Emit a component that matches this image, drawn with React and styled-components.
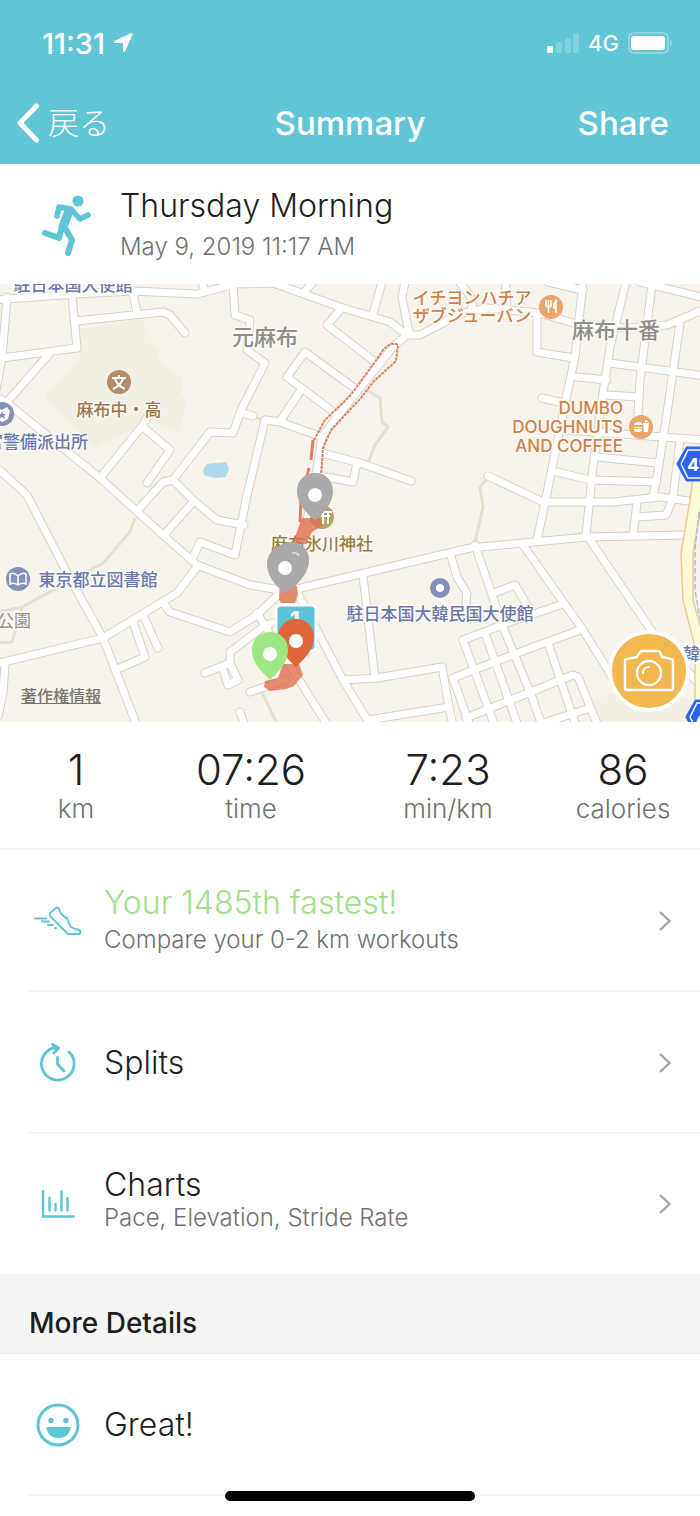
import styled, { createGlobalStyle } from 'styled-components';

const roads = [
  'M-5 300L20 298L75 294L133 291L197 294L235 284L273 283L340 307L390 322L407 335',
  'M407 335L420 335L460 314L487 308L540 313L573 323L603 326L627 328L667 325L705 309',
  'M7 297L2 358L-4 390',
  'M72 296L77 348L2 358',
  'M76 321L163 312L170 315L185 333',
  'M133 292L137 313',
  'M50 353L7 402',
  'M-5 396L7 403L100 478L163 535L197 565L250 585L280 590L297 589L470 548L523 543L587 537L685 535',
  'M-5 466L27 495L67 573L103 638L137 726',
  'M100 478L143 425L148 416',
  'M143 427L170 450L147 483',
  'M137 511L163 482L173 480L210 432L233 433L242 408L265 363L247 350L250 320L235 315L233 284',
  'M242 413L253 416',
  'M173 480L193 500L217 520L244 525',
  'M193 502L164 535',
  'M246 500L235 555L200 542L192 560',
  'M265 420L246 500',
  'M265 420L280 422L322 437',
  'M281 420L301 390',
  'M335 413L287 377L305 352L357 390',
  'M375 362L327 325L341 309',
  'M407 335L393 347L340 413L322 437L315 480L307 520',
  'M322 453L360 463L411 481',
  'M357 463L353 482L327 477',
  'M373 314L382 282',
  'M409 333L402 297L405 282',
  'M306 290L315 280',
  'M202 282L205 292',
  'M583 282L575 357L563 413L545 503L537 540',
  'M626 282L610 347L603 393L593 467L586 535',
  'M652 284L640 380L638 415',
  'M680 323L667 413L657 477L653 497',
  'M537 315L537 352L573 358',
  'M610 363L705 376',
  'M577 377L607 380',
  'M607 395L638 397',
  'M542 398L563 403',
  'M567 430L705 440',
  'M597 457L657 463',
  'M557 472L590 480L657 482',
  'M488 476L543 502L613 502L660 497L695 502',
  'M680 440L673 498',
  'M640 282L705 298',
  'M458 280L473 300L471 312',
  'M505 280L507 308',
  'M548 282L583 290',
  'M637 503L633 535',
  'M637 517L666 515L671 503',
  'M475 545L503 627L532 697L542 726',
  'M523 545L583 630L614 680',
  'M590 540L653 633L700 685',
  'M497 592L515 585L528 607',
  'M560 605L510 622L463 640L495 726',
  'M580 630L520 652L453 678L470 726',
  'M485 633L518 726',
  'M548 643L576 726',
  'M466 718L573 675L578 677L598 726',
  'M540 724L590 708',
  'M450 553L457 577L467 593L465 610',
  'M363 576L375 678',
  'M297 592L343 680L371 726',
  'M343 680L377 678L442 667L449 707L453 726',
  'M368 720L449 707',
  'M257 613L328 726',
  'M280 593L257 615L230 632L170 612L163 603',
  'M272 623L263 627L230 652L230 663L205 673',
  'M222 667L228 685L238 680L230 663',
  'M250 692L285 680',
  'M240 712L245 726',
  'M197 567L177 593L103 638L-5 664',
  'M133 622L145 657L115 670',
  'M144 617L158 648',
  'M5 664L3 693L-2 716',
];

const footpaths = [
  'M367 390L380 398L382 422L388 427L375 445L368 463',
  'M488 477L480 487L483 507L475 542',
  'M135 518L130 532L103 563L22 607L-2 612',
  'M22 608L12 642L-2 643',
  'M262 692L277 724',
  'M253 417L266 420',
];

const stats = [
  { value: '1', unit: 'km' },
  { value: '07:26', unit: 'time' },
  { value: '7:23', unit: 'min/km' },
  { value: '86', unit: 'calories' },
];

const MapPin = ({ x, y, color }) => (
  <g transform={`translate(${x} ${y})`}>
    <path
      d="M0 26C-3 22-18 12-18-4C-18-15-10-22 0-22C10-22 18-15 18-4C18 12 3 22 0 26Z"
      fill={color}
    />
    <circle r="7" fill="#fff" />
  </g>
);

const RouteShield = ({ x, y }) => (
  <g transform={`translate(${x} ${y})`}>
    <path d="M0 16L9 0H36V32H9Z" fill="#2c64ee" stroke="#2c64ee" strokeWidth="3" strokeLinejoin="round" />
    <path d="M3 16L10 2H36M3 16L10 30H36" fill="none" stroke="#fff" strokeWidth="1.6" />
    <ShieldNumber x="9" y="23">41</ShieldNumber>
  </g>
);

const WorkoutMap = () => (
  <MapDrawing viewBox="0 284 700 438" preserveAspectRatio="xMidYMid slice" role="img" aria-label="Workout route">
    <rect y="284" width="700" height="438" fill="#f8f4ec" />
    <path
      d="M79 329L142 319L150 338L160 350L157 361L182 378L181 396L187 398L179 433L150 420L96 448L84 438L45 397L80 360Z"
      fill="#f4efe4"
    />
    <path d="M585 705L620 690L695 700V722H595Z" fill="#f4efe4" />
    <path d="M203 470L207 464L226 462L229 469L226 477L214 478L204 475Z" fill="#afd8eb" />
    <g fill="none" stroke="#e4dfd3" strokeWidth="3">
      {footpaths.map((d) => (
        <path key={d} d={d} />
      ))}
    </g>
    <g fill="none" stroke="#d6d0c7" strokeWidth="9" strokeLinecap="round" strokeLinejoin="round">
      {roads.map((d) => (
        <path key={d} d={d} />
      ))}
    </g>
    <g fill="none" stroke="#fff" strokeWidth="7" strokeLinecap="round" strokeLinejoin="round">
      {roads.map((d) => (
        <path key={d} d={d} />
      ))}
    </g>
    <path
      d="M693 478L690 500L681 553L683 600L695 647V724H704V640L693 600V553L702 500V478Z"
      fill="#fbfad9"
      stroke="#ebc98c"
      strokeWidth="1.4"
    />
    <path d="M699 512L695 550L695 590L701 625" fill="none" stroke="#aab9da" strokeWidth="1.4" strokeDasharray="6 2" />

    <g fill="none" stroke="#df7f62" strokeWidth="2">
      <path d="M314 440L325 420L350 396L375 362L383 350Q392 341 398 345L396 361L374 381L360 399L331 430L323 448L321 478" strokeDasharray="3 1" />
      <path d="M313 440L311 460M309 468L307 476M301 500L300 522" strokeWidth="3" />
    </g>

    <g>
      <circle cx="322" cy="517" r="12" fill="#b8a06a" />
      <path d="M319 512H332M321 516H330M323 512V524M328 512V524" stroke="#fff" strokeWidth="2" />
      <PlaceName x="322" y="550" $color="#98803f">麻布氷川神社</PlaceName>
    </g>
    <g fill="#de6d48" fillOpacity=".78">
      <path d="M302 518L311 518L321 519L322 526L312 532L306 544L293 543L300 523Z" />
      <path d="M280 583L297 586L298 595L295 603H281L279 599Z" />
      <path d="M283 664L299 664L303 675L294 686L286 689L270 691L264 687L265 681L278 678Z" />
    </g>

    <AreaName x="265" y="345">元麻布</AreaName>
    <AreaName x="616" y="338">麻布十番</AreaName>
    <PlaceName x="73" y="291" $color="#6878ae">駐日本国大使館</PlaceName>
    <PlaceName x="119" y="416" $color="#9d754d">麻布中・高</PlaceName>
    <PlaceName x="37" y="448" $color="#6878ae">宮警備派出所</PlaceName>
    <PlaceName x="98" y="586" $color="#6878ae">東京都立図書館</PlaceName>
    <PlaceName x="440" y="620" $color="#6878ae">駐日本国大韓民国大使館</PlaceName>
    <PlaceName x="700" y="660" $color="#6878ae">韓人</PlaceName>
    <ParkName x="14" y="627">公園</ParkName>
    <PlaceName x="472" y="304" $color="#cd8246">イチヨンハチア</PlaceName>
    <PlaceName x="472" y="322" $color="#cd8246">ザブジューバン</PlaceName>
    <PlaceName x="623" y="414" $color="#cd8246" $end>DUMBO</PlaceName>
    <PlaceName x="623" y="433" $color="#cd8246" $end>DOUGHNUTS</PlaceName>
    <PlaceName x="623" y="452" $color="#cd8246" $end>AND COFFEE</PlaceName>

    <circle cx="119" cy="382" r="12" fill="#b08e6b" />
    <path d="M112 378H126M119 375V378M123 379Q120 386 113 389M115 379Q118 386 125 389" fill="none" stroke="#fff" strokeWidth="2" />
    <circle cx="2" cy="414" r="12" fill="#8490ba" />
    <path d="M-3 408L2 410L7 407L10 411L8 419L2 422L-4 419Z" fill="#fff" />
    <path d="M2 411L3 414H6L4 416L5 419L2 417L-1 419L0 416L-2 414H1Z" fill="#8490ba" />
    <circle cx="18" cy="579" r="12" fill="#8490ba" />
    <path d="M18 576Q14 572 10 574V584Q14 582 18 585Q22 582 26 584V574Q22 572 18 576V585" fill="none" stroke="#fff" strokeWidth="1.5" />
    <circle cx="440" cy="588" r="10" fill="#8490ba" />
    <circle cx="440" cy="588" r="4" fill="#fff" />
    <circle cx="551" cy="307" r="12" fill="#e9a56c" />
    <path d="M546 300V305Q546 307 548.5 307Q551 307 551 305V300M548.5 300V313M556 313V301Q553 304 554 308H556" fill="none" stroke="#fff" strokeWidth="1.7" />
    <circle cx="641" cy="427" r="12" fill="#e9a56c" />
    <path d="M634 425Q634 422 638 422Q642 422 642 425ZM634 427H642V428H634ZM634 429H642Q642 432 640 432H636Q634 432 634 429ZM643 423H649L648 432H644ZM645 423V420L648 421V422H646V423Z" fill="#fff" />

    <RouteShield x={678} y={448} />
    <RouteShield x={687} y={701} />

    <MapPin x={315} y={495} color="#a9a9a9" />
    <MapPin x={291} y={564} color="#a9a9a9" />
    <MapPin x={285} y={568} color="#a9a9a9" />
    <path d="M292 553Q297 552 299 556" fill="none" stroke="#ddd" strokeWidth="1.5" />
    <rect x="276" y="605" width="40" height="46" rx="5" fill="#5dc3d6" stroke="#fff" strokeWidth="3" />
    <MarkerNumber x="295" y="629">1</MarkerNumber>
    <MapPin x={296} y={641} color="#df6638" />
    <MapPin x={270} y={654} color="#9fe784" />
  </MapDrawing>
);

const RunnerIcon = () => (
  <svg width="50" height="62" viewBox="42 194 50 62" fill="none" stroke="#5fc4d5" strokeWidth="6" strokeLinecap="round" strokeLinejoin="round">
    <circle cx="78" cy="201" r="5.6" fill="#5fc4d5" stroke="none" />
    <path d="M57 216L59 207L71 209L80 219L88 215" strokeWidth="5.6" />
    <path d="M69 211L63 227" strokeWidth="9" />
    <path d="M64 226L72 240L68 253M62 227L59 238L45 233" strokeWidth="6" />
  </svg>
);

const ShoeIcon = () => (
  <svg width="48" height="30" viewBox="32 905 48 30" fill="none" stroke="#5fc4d5" strokeWidth="2" strokeLinecap="round" strokeLinejoin="round">
    <path d="M48 912L54 907Q56 906 57 908Q59 915 65 917Q67 923 69 926Q72 928 77 929Q79 930 78 933H66L49 916Q47 914 48 912Z" />
    <path d="M33 917.5H44M40 920.5H47M46 924H51M53 927H54" />
  </svg>
);

const SplitsIcon = () => (
  <svg width="38" height="40" viewBox="38 1043 38 40" fill="none" stroke="#5fc4d5" strokeWidth="2.8" strokeLinecap="round" strokeLinejoin="round">
    <path d="M68 1052A16.3 16.3 0 1 1 56 1047.5M51.5 1044.5L57.5 1048L53 1053M56.5 1057.5V1064L63 1071" />
  </svg>
);

const ChartIcon = () => (
  <svg width="34" height="28" viewBox="41 1190 34 28" fill="none" stroke="#5fc4d5" strokeWidth="2.4" strokeLinecap="round" strokeLinejoin="round">
    <path d="M43 1191V1216.5H74M49.5 1198V1210.5M55.5 1204V1210.5M61.5 1191.5V1210.5M67.5 1198V1210.5" />
  </svg>
);

const SmileIcon = () => (
  <svg width="44" height="44" viewBox="0 0 44 44">
    <circle cx="22" cy="22" r="20" fill="none" stroke="#5fc4d5" strokeWidth="3" />
    <circle cx="15" cy="17.5" r="2.7" fill="#5fc4d5" />
    <circle cx="30" cy="17.5" r="2.7" fill="#5fc4d5" />
    <path d="M11 24H34Q35 24 34.5 26Q32 35 22.5 35Q13 35 10.5 26Q10 24 11 24Z" fill="#5fc4d5" />
  </svg>
);

const Chevron = () => (
  <svg width="14" height="22" viewBox="0 0 14 22" fill="none" stroke="#a6a6a6" strokeWidth="2.4">
    <path d="M2 2L11.5 11L2 20" />
  </svg>
);

const App = () => (
  <Page>
    <GlobalStyle />
    <Header>
      <StatusBar>
        <Clock>
          11:31
          <svg width="20" height="20" viewBox="0 0 20 20">
            <path d="M18 0Q20 0 19.5 2L12 18.5Q10.5 20 10 18V10H2Q0 9.5 1.5 8Z" fill="#fff" />
          </svg>
        </Clock>
        <Signal>
          <svg width="32" height="20" viewBox="0 0 32 20" fill="#fff">
            <rect y="13" width="6" height="7" rx="1.5" />
            <rect x="9" y="9" width="6" height="11" rx="1.5" opacity=".2" />
            <rect x="18" y="5" width="6" height="15" rx="1.5" opacity=".2" />
            <rect x="26" width="6" height="20" rx="1.5" opacity=".2" />
          </svg>
          4G
          <svg width="45" height="22" viewBox="0 0 45 22" fill="#fff">
            <rect x="1" y="1" width="39" height="20" rx="5" fill="none" stroke="#fff" strokeWidth="1.6" opacity=".4" />
            <rect x="3" y="4" width="34" height="14" rx="3" />
            <path d="M42 7.5Q45 11 42 14.5Z" opacity=".5" />
          </svg>
        </Signal>
      </StatusBar>
      <NavBar>
        <BackButton type="button">
          <svg width="24" height="40" viewBox="0 0 24 40" fill="none" stroke="#fff" strokeWidth="5" strokeLinecap="round" strokeLinejoin="round">
            <path d="M20.5 3L4 20L20.5 37" />
          </svg>
          <BackLabel>戻る</BackLabel>
        </BackButton>
        <NavTitle>Summary</NavTitle>
        <ShareButton type="button">Share</ShareButton>
      </NavBar>
    </Header>

    <Workout>
      <RunnerIcon />
      <div>
        <WorkoutName>Thursday Morning</WorkoutName>
        <WorkoutDate>May 9, 2019 11:17 AM</WorkoutDate>
      </div>
    </Workout>

    <MapArea>
      <WorkoutMap />
      <Copyright href="#copyright">著作権情報</Copyright>
      <CameraButton type="button" aria-label="Add photo">
        <svg width="52" height="44" viewBox="0 0 52 44" fill="none" stroke="#fff" strokeWidth="2.4" strokeLinejoin="round">
          <path d="M4 10Q2 10 2 12V39Q2 41 4 41H48Q50 41 50 39V12Q50 10 48 10L39 8L37 3Q36.5 2 35 2H19Q17.5 2 17 3L14 8Z" />
          <circle cx="26" cy="24" r="12" />
          <path d="M20 24Q20 18 26 18" strokeWidth="2" strokeLinecap="round" />
        </svg>
      </CameraButton>
    </MapArea>

    <Stats>
      {stats.map(({ value, unit }) => (
        <Stat key={unit}>
          <StatValue>{value}</StatValue>
          <StatUnit>{unit}</StatUnit>
        </Stat>
      ))}
    </Stats>

    <Row type="button">
      <IconBox><ShoeIcon /></IconBox>
      <RowText>
        <RowTitle $color="#9fe08a">Your 1485th fastest!</RowTitle>
        <RowDetail $roomy>Compare your 0-2 km workouts</RowDetail>
      </RowText>
      <Chevron />
    </Row>
    <Row type="button">
      <IconBox><SplitsIcon /></IconBox>
      <RowText>
        <RowTitle>Splits</RowTitle>
      </RowText>
      <Chevron />
    </Row>
    <Row type="button" $last>
      <IconBox><ChartIcon /></IconBox>
      <RowText>
        <RowTitle>Charts</RowTitle>
        <RowDetail>Pace, Elevation, Stride Rate</RowDetail>
      </RowText>
      <Chevron />
    </Row>

    <SectionTitle>More Details</SectionTitle>
    <Row as="div">
      <IconBox><SmileIcon /></IconBox>
      <RowText>
        <RowTitle>Great!</RowTitle>
      </RowText>
    </Row>
    <HomeIndicator />
  </Page>
);

export default App;

const GlobalStyle = createGlobalStyle`
  * {
    box-sizing: border-box;
  }
  body {
    margin: 0;
    background: #fff;
    color: #1f1f21;
    font-family: Inter, 'Noto Sans CJK JP', sans-serif;
  }
  button {
    border: none;
    padding: 0;
    background: none;
    color: inherit;
    font: inherit;
    cursor: pointer;
  }
  svg {
    display: block;
    flex-shrink: 0;
  }
`;

const Page = styled.main`
  width: 100%;
  min-height: 100vh;
  padding-bottom: 20px;
`;

const Header = styled.header`
  background: #62c5d5;
  color: #fff;
`;

const StatusBar = styled.div`
  display: flex;
  justify-content: space-between;
  align-items: center;
  height: 82px;
  padding: 4px 27px 0 42px;
`;

const Clock = styled.div`
  display: flex;
  align-items: center;
  gap: 8px;
  font-size: 29px;
  font-weight: 500;
`;

const Signal = styled.div`
  display: flex;
  align-items: center;
  gap: 9px;
  font-size: 22px;
  font-weight: 500;
`;

const NavBar = styled.nav`
  display: grid;
  grid-template-columns: 1fr auto 1fr;
  align-items: center;
  height: 82px;
  padding: 0 31px 0 16px;
`;

const BackButton = styled.button`
  display: flex;
  align-items: center;
  justify-self: start;
  gap: 8px;
  && {
    font-size: 31px;
    font-weight: 300;
  }
`;

const BackLabel = styled.span`
  padding-bottom: 6px;
`;

const NavTitle = styled.h1`
  margin: 0;
  padding-left: 15px;
  font-size: 33px;
  font-weight: 500;
`;

const ShareButton = styled.button`
  && {
    font-size: 33px;
    font-weight: 500;
  }
  justify-self: end;
`;

const Workout = styled.section`
  display: flex;
  align-items: center;
  gap: 28px;
  height: 120px;
  padding: 2px 42px 0;
`;

const WorkoutName = styled.h2`
  margin: 0;
  font-size: 32px;
  font-weight: 300;
  line-height: 44px;
`;

const WorkoutDate = styled.p`
  margin: 0;
  color: #717171;
  font-size: 24px;
  font-weight: 300;
  line-height: 38px;
`;

const MapArea = styled.section`
  position: relative;
  overflow: hidden;
`;

const MapDrawing = styled.svg`
  width: 100%;
  height: auto;
  font-family: Inter, 'Noto Sans CJK JP', sans-serif;
  text-anchor: middle;
`;

const PlaceName = styled.text`
  fill: ${({ $color }) => $color};
  stroke: #fcfaf6;
  stroke-width: 3px;
  stroke-linejoin: round;
  paint-order: stroke;
  font-size: 17px;
  font-weight: 500;
  text-anchor: ${({ $end }) => ($end ? 'end' : 'middle')};
`;

const AreaName = styled(PlaceName).attrs({ $color: '#8e8d89' })`
  font-size: 22px;
`;

const ParkName = styled(PlaceName).attrs({ $color: '#92918c' })`
  font-weight: 400;
`;

const ShieldNumber = styled.text`
  fill: #fff;
  font-size: 18px;
  font-weight: 700;
  text-anchor: start;
`;

const MarkerNumber = styled.text`
  fill: #fff;
  font-size: 24px;
  font-weight: 700;
`;

const Copyright = styled.a`
  position: absolute;
  left: 21px;
  bottom: 15px;
  color: #777570;
  font-size: 16px;
  font-weight: 500;
`;

const CameraButton = styled.button`
  position: absolute;
  right: 10px;
  bottom: 10px;
  display: flex;
  align-items: center;
  justify-content: center;
  width: 82px;
  height: 82px;
  && {
    border: 4px solid #fff;
    background: #f2b74f;
  }
  border-radius: 50%;
`;

const Stats = styled.section`
  display: grid;
  grid-template-columns: 152fr 198fr 196fr 154fr;
  align-content: center;
  height: 128px;
  padding-top: 4px;
  border-bottom: 2px solid #f4f4f4;
`;

const Stat = styled.div`
  display: flex;
  flex-direction: column;
  align-items: center;
`;

const StatValue = styled.strong`
  font-size: 42px;
  font-weight: 300;
  line-height: 44px;
`;

const StatUnit = styled.span`
  color: #717171;
  font-size: 26px;
  font-weight: 300;
  line-height: 34px;
`;

const Row = styled.button`
  display: flex;
  align-items: center;
  width: 100%;
  height: ${({ $last }) => ($last ? 140 : 142)}px;
  && {
    padding: 0 28px;
    background: ${({ $last }) =>
      $last ? 'none' : 'linear-gradient(#f6f6f6, #f6f6f6) 28px 100% / 100% 2px no-repeat'};
  }
  text-align: left;
`;

const IconBox = styled.span`
  display: flex;
  justify-content: center;
  width: 60px;
  margin-right: 16px;
`;

const RowText = styled.span`
  display: flex;
  flex: 1;
  flex-direction: column;
`;

const RowTitle = styled.span`
  color: ${({ $color }) => $color || '#1f1f21'};
  font-size: 32px;
  font-weight: 300;
  line-height: 34px;
`;

const RowDetail = styled.span`
  margin: ${({ $roomy }) => ($roomy ? '4px 0 0' : '0 0 6px')};
  color: #717171;
  font-size: 24px;
  font-weight: 300;
  line-height: 32px;
`;

const SectionTitle = styled.h2`
  display: flex;
  align-items: center;
  height: 80px;
  margin: 0;
  padding: 18px 29px 0;
  border-bottom: 1px solid #ececec;
  background: #f5f5f5;
  font-size: 28px;
  font-weight: 500;
`;

const HomeIndicator = styled.div`
  position: fixed;
  bottom: 15px;
  left: 50%;
  width: 250px;
  height: 10px;
  margin-left: -125px;
  border-radius: 5px;
  background: #000;
`;
